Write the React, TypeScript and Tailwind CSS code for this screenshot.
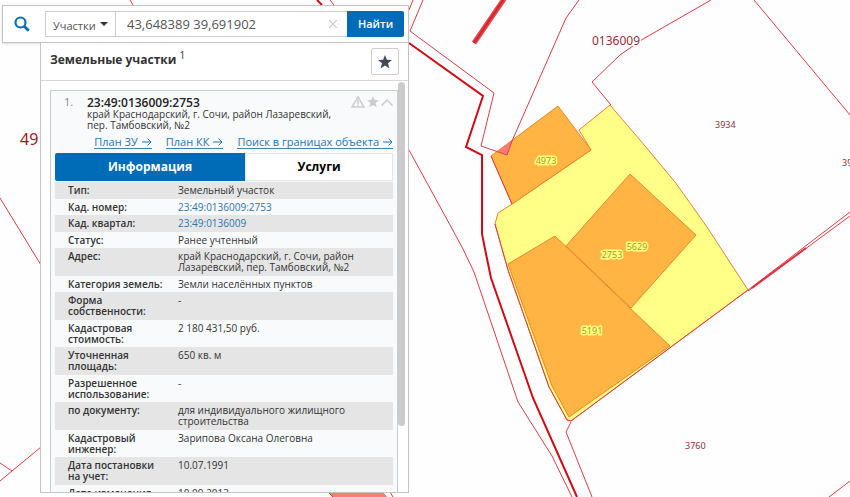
import { useState } from "react";

const details = [
  { label: "Тип:", value: "Земельный участок" },
  { label: "Кад. номер:", value: "23:49:0136009:2753", link: true },
  { label: "Кад. квартал:", value: "23:49:0136009", link: true },
  { label: "Статус:", value: "Ранее учтенный" },
  {
    label: "Адрес:",
    value: "край Краснодарский, г. Сочи, район Лазаревский, пер. Тамбовский, №2",
  },
  { label: "Категория земель:", value: "Земли населённых пунктов" },
  { label: "Форма собственности:", value: "-" },
  { label: "Кадастровая стоимость:", value: "2 180 431,50 руб." },
  { label: "Уточненная площадь:", value: "650 кв. м" },
  { label: "Разрешенное использование:", value: "-" },
  {
    label: "по документу:",
    value: "для индивидуального жилищного строительства",
  },
  { label: "Кадастровый инженер:", value: "Зарипова Оксана Олеговна" },
  { label: "Дата постановки на учет:", value: "10.07.1991" },
  { label: "Дата изменения сведений:", value: "10.09.2013" },
];

const parcelLabels = [
  { text: "4973", x: 546, y: 164 },
  { text: "5629", x: 637, y: 250 },
  { text: "2753", x: 612, y: 258 },
  { text: "5191", x: 592, y: 334 },
];

function StarIcon({ className }: { className: string }) {
  return (
    <svg viewBox="0 0 14 14" className={className} aria-hidden="true">
      <path
        fill="currentColor"
        d="M7 0l1.9 4.8 5.1.3-4 3.2 1.4 5.2L7 10.6l-4.4 2.9L4 8.3 0 5.1l5.1-.3z"
      />
    </svg>
  );
}

function CadastralMap() {
  return (
    <svg
      className="absolute inset-0 h-full w-full"
      viewBox="0 0 850 497"
      preserveAspectRatio="xMinYMin slice"
      role="img"
      aria-label="Кадастровая карта"
    >
      <polygon
        points="579,130 610,105 640,140 675,182 690,203 707,227 748,290 571,421 567,420 549,387 508,270 495,224 498,213 512,204 591,150"
        fill="#ffff87"
        stroke="#e8803a"
      />
      <g fill="#ffb443" stroke="#e8862a">
        <polygon points="491,156 558,106 591,150 512,204" />
        <polygon points="630,174 696,235 631,308 566,246" />
        <polygon points="508,264 555,236 631,309 670,346 569,417 552,386" />
      </g>
      <polygon points="498,151 512,140 507,155" fill="#f77b7b" />
      <polygon points="328,492 383,492 388,498 333,498" fill="#fa7d78" />

      <g fill="none" stroke="#dc3c46" strokeWidth="1">
        <path d="M413 0l-4 10M423 0l-13 31 84 62-13 53 26 9 5-14 54-123 13-18" />
        <path d="M711 0l-68 39-23 16-28 27 19 23M754 0l96 115" />
        <path d="M409 150l53 97 12 25 44 130 34 54 20 41" />
        <path d="M571 422l-5 10 26 65M829 497l21-16" />
        <path d="M491 156l21 48M495 224l13 46 41 117 18 33 4 1 177-131 102-78M748 291l102-75" />
        <path d="M0 198l41 67M0 463l12 8 29-24M12 471L0 481" />
        <path d="M130 0l3 5M330 0l4 5M328 492l5 5M390 492l3 5" />
      </g>
      <path
        d="M317 0l5 5M409 43l74 53-17 51 16 8v79l3 15 6 29 42 120 44 99"
        fill="none"
        stroke="#d00a12"
        strokeWidth="2"
      />
      <path d="M504 -1L474 43" stroke="#e2474b" strokeWidth="5" />
      <path d="M504 -1L474 43" stroke="#d9232b" strokeWidth="2" />
      <path d="M752 288l54-40" stroke="#e0303c" strokeWidth="2" />

      <g
        fill="#8f3038"
        stroke="#ffffff"
        strokeWidth="3"
        paintOrder="stroke"
        className="font-['Noto_Sans',sans-serif]"
      >
        <text x="592" y="45" fontSize="12">0136009</text>
        <text x="715" y="128" fontSize="9">3934</text>
        <text x="842" y="166" fontSize="9">3934</text>
        <text x="685" y="449" fontSize="9">3760</text>
        <text x="20" y="145" fontSize="16" fill="#a3161c">49</text>
      </g>
      <g
        fill="#a59a2c"
        stroke="#ffff7d"
        strokeWidth="3"
        paintOrder="stroke"
        fontSize="9"
        textAnchor="middle"
        className="font-['Noto_Sans',sans-serif]"
      >
        {parcelLabels.map((label) => (
          <text key={label.text} x={label.x} y={label.y}>
            {label.text}
          </text>
        ))}
      </g>
    </svg>
  );
}

function SearchBar() {
  const [query, setQuery] = useState("43,648389 39,691902");

  return (
    <form
      className="flex items-center border border-[#c4c4c4] bg-white py-[5px] pr-1 shadow-sm"
      onSubmit={(e) => e.preventDefault()}
    >
      <svg
        viewBox="0 0 16 16"
        className="mx-[11px] h-4 w-4 shrink-0"
        fill="none"
        stroke="#0a6db8"
        aria-hidden="true"
      >
        <circle cx="6.5" cy="6.5" r="5" strokeWidth="2.2" />
        <path d="M10.2 10.2l4.6 4.6" strokeWidth="2.8" />
      </svg>
      <div className="ml-1 flex h-[26px] min-w-0 flex-1 border border-r-0 border-[#cccccc]">
        <div className="relative w-[70px] shrink-0 border-r border-[#cccccc]">
          <select
            aria-label="Тип объекта"
            className="h-full w-full appearance-none bg-transparent pb-[2px] pl-[7px] text-[11px] text-[#555]"
          >
            <option>Участки</option>
            <option>ОКС</option>
          </select>
          <span className="pointer-events-none absolute top-[10px] right-[7px] border-x-4 border-t-4 border-x-transparent border-t-[#333]" />
        </div>
        <input
          aria-label="Поиск"
          className="min-w-0 flex-1 pt-[2px] pl-[11px] text-[13px] text-[#555] outline-none"
          value={query}
          onChange={(e) => setQuery(e.target.value)}
        />
        <button
          type="button"
          aria-label="Очистить"
          className="flex w-7 items-center justify-center text-[#cccccc]"
          onClick={() => setQuery("")}
        >
          <svg viewBox="0 0 8 8" className="h-2 w-2" stroke="currentColor" strokeWidth="1.2">
            <path d="M0 0l8 8M8 0L0 8" />
          </svg>
        </button>
      </div>
      <button
        type="submit"
        className="h-[26px] w-[57px] shrink-0 rounded-r-xs bg-[#006cb7] text-[11px] font-semibold text-white"
      >
        Найти
      </button>
    </form>
  );
}

function ArrowLink({ children }: { children: string }) {
  return (
    <a
      href="#"
      className="flex items-center gap-1 border-b border-[#3a82b8] text-[#2c75ae]"
    >
      {children}
      <svg viewBox="0 0 10 8" className="h-2 w-[10px]" fill="none" stroke="currentColor">
        <path d="M0 4h9M5.500 .5L9 4 5.500 7.500" />
      </svg>
    </a>
  );
}

function ParcelTable() {
  return (
    <table className="mt-px w-full table-fixed text-left text-[10px] leading-[11px] text-[#333]">
      <tbody>
        {details.map((row) => (
          <tr
            key={row.label}
            className="align-top odd:border-b odd:border-[#e5e5e5] odd:bg-[#e5e5e5]"
          >
            <th scope="row" className="w-[120px] pt-[3px] pr-2 pb-[2px] pl-[13px] font-semibold">
              {row.label}
            </th>
            <td className="pt-[3px] pr-6 pb-[2px] pl-[3px]">
              {row.link ? (
                <a href="#" className="text-[#2c75ae]">
                  {row.value}
                </a>
              ) : (
                row.value
              )}
            </td>
          </tr>
        ))}
      </tbody>
    </table>
  );
}

function ParcelCard() {
  return (
    <article className="border border-b-0 border-[#c9cdd1] bg-[#f8fafc] px-1 pt-[5px]">
      <header className="flex items-start pl-2">
        <span className="w-6 pl-px text-[11px] leading-3 text-[#888]">1.</span>
        <div className="flex-1">
          <h2 className="text-[12px] leading-[13px] font-semibold text-[#222]">
            23:49:0136009:2753
          </h2>
          <p className="w-[250px] text-[10px] leading-[11px] text-[#333]">
            край Краснодарский, г. Сочи, район Лазаревский, пер. Тамбовский, №2
          </p>
        </div>
        <div className="flex items-center gap-[2px] text-[#cccccc]">
          <svg viewBox="0 0 14 12" className="h-3 w-[14px]" fill="none" stroke="currentColor" strokeWidth="1.500">
            <path d="M7 1l6 10H1zM7 4v4M7 8.500v1.500" />
          </svg>
          <StarIcon className="h-3 w-3" />
          <svg viewBox="0 0 12 7" className="h-[7px] w-3" fill="none" stroke="currentColor" strokeWidth="1.500">
            <path d="M.5 6.500L6 1l5.500 5.500" />
          </svg>
        </div>
      </header>
      <nav className="mt-1 flex justify-end gap-[14px] text-[11px] leading-[13px]">
        <ArrowLink>План ЗУ</ArrowLink>
        <ArrowLink>План КК</ArrowLink>
        <ArrowLink>Поиск в границах объекта</ArrowLink>
      </nav>
      <div className="mt-1 flex h-7 text-[12px] font-bold" role="tablist">
        <button
          type="button"
          role="tab"
          aria-selected="true"
          className="w-[190px] rounded-l-xs bg-[#006cb7] text-white"
        >
          Информация
        </button>
        <button
          type="button"
          role="tab"
          aria-selected="false"
          className="flex-1 border border-[#e3e5e7] bg-white text-black"
        >
          Услуги
        </button>
      </div>
      <ParcelTable />
    </article>
  );
}

export default function App() {
  return (
    <div className="relative h-screen overflow-hidden bg-[#fefefe] font-['Open_Sans','Noto_Sans',sans-serif]">
      <CadastralMap />
      <main className="relative flex h-full w-[409px] max-w-full flex-col pt-[5px] pb-1 pl-[2px]">
        <SearchBar />
        <section className="ml-[38px] flex min-h-0 flex-1 flex-col border border-t-0 border-[#c4c4c4] bg-white">
          <div className="flex h-[38px] shrink-0 items-center justify-between border-b border-[#d8d8d8] pr-[9px] pl-[9px]">
            <h1 className="pb-1 text-[12px] font-bold text-[#333]">
              Земельные участки{" "}
              <sup className="text-[10px] font-normal">1</sup>
            </h1>
            <button
              type="button"
              aria-label="Избранное"
              className="flex h-[27px] w-7 items-center justify-center rounded-xs border border-[#cccccc] text-[#434b57]"
            >
              <StarIcon className="h-[14px] w-[14px]" />
            </button>
          </div>
          <div className="flex min-h-0 flex-1">
            <div className="min-w-0 flex-1 overflow-hidden pt-[9px] pl-[9px]">
              <ParcelCard />
            </div>
            <div className="mr-[3px] w-[7px] pt-px">
              <div className="h-[84%] rounded-full bg-[#cbcbcb]" />
            </div>
          </div>
        </section>
      </main>
    </div>
  );
}
